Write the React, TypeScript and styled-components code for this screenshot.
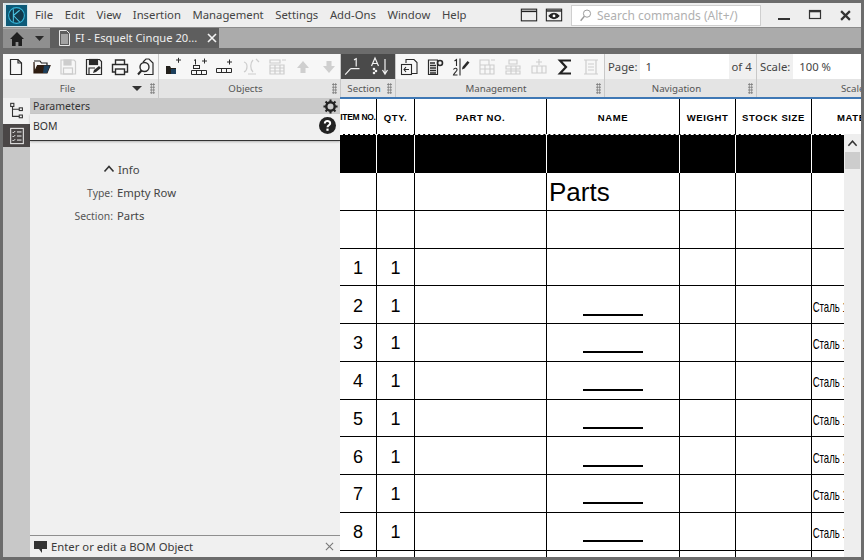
import React from "react";
import styled, { createGlobalStyle } from "styled-components";

const Global = createGlobalStyle`
  html, body { margin: 0; padding: 0; background: #6b6b6b; }
  * { box-sizing: border-box; }
`;

const Window = styled.div`
  width: 864px; height: 560px; overflow: hidden;
  border: 3px solid #6c6c6c;
  display: flex; flex-direction: column;
  font-family: "Noto Sans", "Open Sans", sans-serif;
  color: #3a3a3a;
`;

/* ---------- title bar ---------- */
const TitleBar = styled.div`
  height: 25px; flex: none; background: #eeeeee;
  display: flex; align-items: center;
  border-bottom: 1px solid #8b8b8b;
`;
const LogoBox = styled.div`
  width: 24px; height: 24px; margin-left: 1px; background: #d3e4ea;
  display: flex; align-items: center; justify-content: center;
`;
const Menu = styled.nav`
  display: flex; gap: 11.6px; margin-left: 7px; font-size: 11.3px; line-height: 16px; color: #444;
`;
const TitleTools = styled.div`
  margin-left: auto; display: flex; align-items: center;
`;
const ViewToggle = styled.span`
  display: flex; width: 25px; justify-content: center; color: #222;
`;
const SearchBox = styled.div`
  width: 190px; height: 21px; margin: 0 7px 0 5px; background: #fff; border: 1px solid #cfcfcf;
  display: flex; align-items: center; gap: 4px; padding-left: 6px;
  font-size: 12px; color: #b0b0b0; white-space: nowrap;
`;
const WinButton = styled.span`
  width: 31px; display: flex; justify-content: center; color: #333;
`;

/* ---------- tabs ---------- */
const TabBar = styled.div`
  height: 20px; flex: none; background: #ababab; display: flex;
`;
const HomeTabs = styled.div`
  width: 47px; margin-top: 1px; background: #8f8f8f; display: flex; align-items: center;
  padding-left: 6px; gap: 10px;
`;
const DocTab = styled.div`
  width: 169px; background: #5e5e5e; color: #eeeeee; font-size: 11.2px; line-height: 16px;
  display: flex; align-items: center; padding-left: 8px; gap: 4px; white-space: nowrap;
  svg { flex: none; }
`;
const TabClose = styled.span`
  margin-left: 6px; display: flex; color: #f4f4f4;
`;
const ToolbarGap = styled.div`
  height: 6px; flex: none; background: #6c6c6c;
`;

/* ---------- toolbar ---------- */
const Toolbar = styled.div`
  height: 44px; flex: none; display: flex; background: #e4e4e4;
`;
const Group = styled.section<{ $w: number }>`
  width: ${p => p.$w}px; flex: none; display: flex; flex-direction: column; overflow: hidden;
  border-right: 1px solid #c8c8c8;
  &:last-child { border-right: none; }
`;
const IconRow = styled.div<{ $dark?: boolean; $shift?: number }>`
  height: 25px; flex: none; display: flex; align-items: center;
  padding-left: ${p => p.$shift ?? 0}px;
  background: ${p => (p.$dark ? "#4a4a4a" : "#f7f7f7")};
`;
const ToolBtn = styled.span<{ $muted?: boolean; $light?: boolean }>`
  width: 26px; height: 25px; flex: none; display: flex; align-items: center; justify-content: center;
  color: ${p => (p.$light ? "#f2f2f2" : "#2a2a2a")};
  opacity: ${p => (p.$muted ? 0.2 : 1)};
`;
const GroupFoot = styled.div`
  flex: 1; display: flex; align-items: center; padding-right: 3px;
  font-size: 9.7px; color: #555; background: #e4e4e4; white-space: nowrap;
`;
const GroupLabel = styled.span<{ $start?: number }>`
  flex: 1; text-align: ${p => (p.$start ? "left" : "center")};
  padding-left: ${p => p.$start ?? 0}px;
`;
const FootCaret = styled.span`
  width: 0; height: 0; margin-right: 8px; border-left: 5px solid transparent; border-right: 5px solid transparent;
  border-top: 5px solid #333;
`;
const Grip = styled.span`
  width: 5px; height: 11px; flex: none;
  background-image: radial-gradient(#777 0.8px, transparent 1px);
  background-size: 2.5px 2.8px;
`;
const FieldRow = styled.div`
  height: 25px; flex: none; display: flex; align-items: center; background: #f0f0f0;
  font-size: 11.3px; color: #444; padding-left: 3px; white-space: nowrap;
`;
const FieldInput = styled.span<{ $w: number; $gap: number }>`
  width: ${p => p.$w}px; height: 25px; flex: none; margin: 0 3px 0 ${p => p.$gap}px; background: #fff;
  display: flex; align-items: center; padding-left: 6px;
`;

/* ---------- main ---------- */
const Main = styled.main`
  flex: 1; min-height: 0; display: flex;
`;
const SideRail = styled.aside`
  width: 27px; flex: none; background: #c8c8c8; display: flex; flex-direction: column;
`;
const RailBtn = styled.span<{ $active?: boolean }>`
  height: ${p => (p.$active ? 23 : 26)}px; display: flex; align-items: center; justify-content: center;
  background: ${p => (p.$active ? "#4a4646" : "#f0f0f0")};
  color: ${p => (p.$active ? "#f4f4f4" : "#333")};
`;
const Panel = styled.div`
  width: 310px; flex: none; background: #f0f0f0; display: flex; flex-direction: column;
`;
const PanelHead = styled.div`
  height: 16px; flex: none; background: #c9c9c9; display: flex; align-items: center; justify-content: space-between;
  padding: 0 2px 0 3px; font-size: 10.5px; color: #333;
`;
const BomRow = styled.div`
  height: 27px; flex: none; display: flex; align-items: center; justify-content: space-between;
  padding: 0 4px 3px 3px; font-size: 10.5px; color: #333;
  border-bottom: 1px solid #333; box-shadow: 0 1px 2px rgba(0,0,0,.25);
`;
const PanelBody = styled.div`
  flex: 1; padding: 19px 0 0 0; font-size: 11.3px; color: #444;
`;
const InfoHead = styled.div`
  display: flex; align-items: center; gap: 3px; padding-left: 73px; height: 18px; margin-bottom: 3px;
`;
const InfoRow = styled.div`
  display: grid; grid-template-columns: 83px 1fr; column-gap: 4px; height: 23px; align-items: center;
`;
const InfoKey = styled.span`
  text-align: right; color: #555; font-size: 10.4px;
`;
const StatusBar = styled.div`
  height: 22px; flex: none; display: flex; align-items: center; gap: 3px; padding: 0 6px 0 4px;
  border-top: 1px solid #8f8f8f; font-size: 11.3px; color: #3a3a3a;
`;
const StatusClose = styled.span`
  margin-left: auto; display: flex; color: #777;
`;

/* ---------- sheet ---------- */
const Sheet = styled.div`
  flex: 1; min-width: 0; background: #fff; display: flex; flex-direction: column;
  border-top: 2px solid #3f78b5; font-family: "Liberation Sans", Arial, sans-serif; color: #000;
  margin-top: -1px;
`;
const HeadRow = styled.div`
  height: 35px; flex: none; display: grid; grid-template-columns: 37px 38px 132px 133px 56px 76px 1fr;
`;
const HeadCell = styled.div<{ $tight?: boolean }>`
  border-right: 1px solid #000; display: flex; align-items: center; justify-content: center; padding-top: 1px;
  font-size: ${p => (p.$tight ? 8.5 : 9.5)}px; font-weight: 700; white-space: nowrap; overflow: hidden;
  letter-spacing: ${p => (p.$tight ? "-0.3px" : "0.6px")};
  &:last-child { border-right: none; justify-content: flex-start; padding-left: 25px; }
`;
const SheetBody = styled.div`
  flex: 1; min-height: 0; display: flex;
`;
const Rows = styled.div`
  flex: 1; min-width: 0; overflow: hidden;
`;
const BandRow = styled.div`
  height: 39px; display: grid; grid-template-columns: 37px 38px 132px 133px 56px 76px 1fr;
  background: #000; border-top: 1px dashed #fff;
`;
const BandCell = styled.div`
  border-right: 1px solid #fff;
  &:last-child { border-right: none; }
`;
const DataRow = styled.div`
  height: 37.75px; display: grid; grid-template-columns: 37px 38px 132px 133px 56px 76px 1fr;
  border-bottom: 1px solid #000;
`;
const Cell = styled.div`
  border-right: 1px solid #000; display: flex; align-items: center; justify-content: center;
  padding-top: 3px; font-size: 18px; overflow: hidden; white-space: nowrap;
  &:last-child { border-right: none; }
`;
const PartsTitle = styled.span`
  font-size: 26px; width: 100%; padding-left: 2px;
`;
const Signature = styled.span`
  display: block; width: 60px; height: 2px; background: #000; margin-top: 17px;
`;
const Material = styled.span`
  display: block; flex: none; font-size: 15px; width: 100%; padding-left: 1px;
  transform: scaleX(0.64); transform-origin: left center;
`;
const Scroll = styled.div`
  width: 17px; flex: none; background: #eeeeee; display: flex; flex-direction: column; align-items: center;
  padding-top: 4px;
`;
const ScrollThumb = styled.div`
  width: 15px; height: 17px; margin-top: 3px; background: #cdcdcd;
`;

/* ---------- drawings ---------- */
type P = { s?: number };
const Svg: React.FC<React.PropsWithChildren<{ s?: number; w?: number }>> = ({ s = 20, w = 1.2, children }) => (
  <svg width={s} height={s} viewBox="0 0 20 20" fill="none" stroke="currentColor" strokeWidth={w}>{children}</svg>
);
const Logo = () => (
  <svg width="21" height="21" viewBox="0 0 20 20">
    <rect width="20" height="20" fill="#0d5a78" />
    <circle cx="10" cy="10" r="7.5" fill="#123a4c" stroke="#33b4d8" strokeWidth="1" />
    <path d="M7 4v12M7 10l6-5M7 10l6 6" stroke="#4cc4e4" strokeWidth="1" fill="none" />
  </svg>
);
const WindowIcon = () => <Svg s={18}><rect x="1.5" y="3.5" width="17" height="13" /><path d="M1.5 6h17" strokeWidth="1.6" /></Svg>;
const EyeIcon = () => (
  <Svg s={18}><rect x="1.5" y="3.5" width="17" height="13" /><path d="M1.5 5.5h17" strokeWidth="1.6" />
    <path d="M4.5 11c3-4 8-4 11 0-3 4-8 4-11 0z" fill="currentColor" /><circle cx="10" cy="11" r="1.6" fill="#fff" stroke="none" /></Svg>
);
const SearchIcon = () => <Svg s={15} w={1.3}><circle cx="12" cy="7.5" r="4.8" stroke="#999" /><path d="M8.5 11L3.5 17" stroke="#999" strokeWidth="1.8" /></Svg>;
const HomeIcon = () => (
  <svg width="16" height="16" viewBox="0 0 16 16" fill="#1f1f1f"><path d="M8 1L1 8h2v7h3.6v-4h2.8v4H13V8h2z" /></svg>
);
const Caret = () => <svg width="9" height="5" viewBox="0 0 9 5" fill="#2a2a2a"><path d="M0 0h9L4.5 5z" /></svg>;
const DocLines = () => (
  <svg width="13" height="16" viewBox="0 0 13 16" fill="none" stroke="#e8e8e8" strokeWidth="1">
    <path d="M1.5.5h7l3 3v12h-10z" /><path d="M3 5h7M3 7h7M3 9h7M3 11h7M3 13h7" />
  </svg>
);
const Cross = ({ s = 10, w = 1.6 }: P & { w?: number }) => (
  <svg width={s} height={s} viewBox="0 0 10 10" stroke="currentColor" strokeWidth={w}><path d="M1 1l8 8M9 1l-8 8" /></svg>
);
const NewFile = () => <Svg><path d="M4.5 2.5h7.5l3.5 3.5v11.5h-11z" /><path d="M12 2.5V6h3.5" /></Svg>;
const OpenFolder = () => <Svg><path d="M2 4h6l1.5 2H15v2.5" stroke="#222" /><path d="M2 5v11h13l3-7.5H5.5L3 14" fill="#2e1c10" stroke="#2e1c10" /><path d="M12 8.5h6l-3 7.5h-4z" fill="#1c3f5c" stroke="none" /></Svg>;
const SaveGray = () => <Svg><path d="M3 3h13l1.5 1.5V17H3z" /><rect x="6" y="3" width="7" height="5" fill="currentColor" /><rect x="5.5" y="11" width="9" height="6" /></Svg>;
const SaveAs = () => <Svg><path d="M2.5 2.5h13l2 2v13h-15z" /><rect x="5.5" y="2.5" width="8" height="5" fill="currentColor" /><path d="M5 17v-6h6" /><path d="M9 16l1-3 5-4 2 2-5 4z" fill="currentColor" stroke="none" /></Svg>;
const Printer = () => <Svg><path d="M5.5 7V3h9v4M5.5 15h-3V7.5h15V15h-3" strokeWidth="1.4" /><rect x="5.5" y="12" width="9" height="5.5" strokeWidth="1.4" /></Svg>;
const Preview = () => <Svg><path d="M7 5l3-3h3l4 4v11.5H8" /><circle cx="8.5" cy="10" r="4.5" strokeWidth="1.4" /><path d="M5.5 13.5L2 17.5" strokeWidth="2" /></Svg>;
const AddSection = () => (
  <Svg><path d="M13 3h5M15.5 .8v5" strokeWidth="1" /><path d="M3 9h4l1 2h5v6H3z" fill="#23201c" stroke="none" /><path d="M8 12h5v5H8z" fill="#1c3f5c" stroke="none" /></Svg>
);
const AddNumbered = () => (
  <Svg w={1}><path d="M5 3.5l1.5-1v5M13 4h5M15.5 1.5v5" /><rect x="4.5" y="8.5" width="6" height="3" /><path d="M2.5 13.5h15v4h-15zM7.5 13.5v4M12.5 13.5v4" /></Svg>
);
const AddRow = () => <Svg w={1}><path d="M12 5h5M14.5 2.5v5" /><path d="M1.5 11.5h15v4h-15zM6.5 11.5v4M11.5 11.5v4" /></Svg>;
const GhostSplit = () => <Svg w={1.2}><path d="M3 5c4 1 4 8 0 10M12 3c-3 3-3 9 0 12M15 2l3 3M7 17h8" /></Svg>;
const GhostTable = () => <Svg w={1.2}><path d="M3 3h10v3H3zM3 8h14v9H3zM3 11h14M3 14h14M8 8v9M13 8v9M15 3h4" /></Svg>;
const ArrowUp = () => <svg width="20" height="20" viewBox="0 0 20 20" fill="#333"><path d="M10 4l6 7h-3.5v5h-5v-5H4z" /></svg>;
const ArrowDown = () => <svg width="20" height="20" viewBox="0 0 20 20" fill="#333"><path d="M10 16l6-7h-3.5V4h-5v5H4z" /></svg>;
const Baseline = () => <Svg s={22} w={1.1}><path d="M10 3.5l2-1v7M7 11.5h8M7 11.5L2 17" /></Svg>;
const Sort = () => (
  <svg width="24" height="22" viewBox="0 0 24 22" fill="none" stroke="currentColor" strokeWidth="1.2">
    <path d="M3.5 10L7 2l3.5 8M5 7.5h4" /><circle cx="6" cy="13" r=".7" /><circle cx="8" cy="15" r=".7" /><circle cx="6" cy="17" r=".7" /><path d="M17 3v14M14.5 14l2.5 4 2.5-4" />
  </svg>
);
const CopyPage = () => <Svg w={1.1}><path d="M7 6V2.5h8l3 3v11h-5" /><rect x="2.5" y="7.5" width="10" height="10" /><path d="M5 12.5h5M7 10l-2 2.5L7 15" /></Svg>;
const PageGear = () => (
  <Svg w={1.2}><path d="M3.5 3h9v14.5h-9z" /><path d="M5 6h5M5 8.5h6M5 11h6M5 13.5h6M5 16h6" strokeWidth="1.3" /><circle cx="15" cy="6" r="2.5" strokeWidth="1.6" /></Svg>
);
const Fraction = () => (
  <Svg w={1.1}><path d="M3.5 4l2-1.5V9M2.5 12.5c1-2 4-1.5 3.5.5-.3 1.4-3 3-3.5 5h4M9 1.5v17" />
    <path d="M11.5 10l5-6 2 1.5-5 6-2.5 1z" fill="currentColor" stroke="none" /></Svg>
);
const GhostGrid = () => <Svg w={1.1}><path d="M3 3h9v5H3zM3 3v14h14V8H3M8 8v9M13 8v9M3 12h14M14 3h4" /></Svg>;
const GhostGridB = () => <Svg w={1.1}><path d="M6 3h8v4H6zM3 9h14v3H3zM3 14h14v3H3zM8 9v8M13 9v8" /></Svg>;
const GhostInsert = () => <Svg w={1.1}><path d="M10 2v6M7 5h6M3 9h14v7H3zM8 9v7M13 9v7" /></Svg>;
const Sigma = () => <svg width="20" height="20" viewBox="0 0 20 20" fill="none" stroke="#222" strokeWidth="2.2"><path d="M16 3.5H5l6 6.5-6 6.5h11" /></svg>;
const GhostPage = () => <Svg w={1.2}><path d="M3 3h14M5 3v14h10V3M7 7h6M7 10h6M7 13h6M3 17h14" /></Svg>;
const Tree = () => (
  <Svg s={18} w={1.2}><rect x="3" y="1.5" width="3.5" height="3.5" /><rect x="12.5" y="6.5" width="3.5" height="3" /><rect x="12.5" y="14.5" width="3.5" height="3" /><path d="M5 5v11h7.5M5 8h7.5" /></Svg>
);
const Checklist = () => (
  <Svg s={18} w={1.1}><rect x="3" y="1.5" width="14" height="17" /><path d="M5 5.5l1 1 2-2M5 10l1 1 2-2M5 14.5l1 1 2-2M10 5.5h5M10 10h5M10 14.5h5" /></Svg>
);
const Gear = () => (
  <svg width="15" height="15" viewBox="0 0 16 16"><circle cx="8" cy="8" r="4.5" fill="none" stroke="#222" strokeWidth="2.6" />
    <path d="M8 .5v3M8 12.5v3M.5 8h3M12.5 8h3M2.7 2.7l2.1 2.1M11.2 11.2l2.1 2.1M13.3 2.7l-2.1 2.1M4.8 11.2l-2.1 2.1" stroke="#222" strokeWidth="2.2" /></svg>
);
const Help = () => (
  <svg width="17" height="17" viewBox="0 0 17 17"><circle cx="8.5" cy="8.5" r="8.5" fill="#222" />
    <path d="M5.8 6.5c0-3.2 5.4-3.2 5.4-.2 0 2-2.7 2-2.7 4" fill="none" stroke="#fff" strokeWidth="2" /><rect x="7.4" y="11.6" width="2.2" height="2.2" fill="#fff" /></svg>
);
const ChevronUp = ({ s = 12 }: P) => (
  <svg width={s} height={s} viewBox="0 0 12 12" fill="none" stroke="#333" strokeWidth="1.6"><path d="M1.5 8.5L6 3.5l4.5 5" /></svg>
);
const Bubble = () => (
  <svg width="14" height="13" viewBox="0 0 14 13" fill="#333"><path d="M0 1h13v8H8v4L5 9H0z" /></svg>
);

const menu = ["File", "Edit", "View", "Insertion", "Management", "Settings", "Add-Ons", "Window", "Help"];
const columns = ["PART NO.", "NAME", "WEIGHT", "STOCK SIZE", "MATERIAL"];
const parts = [1, 2, 3, 4, 5, 6, 7, 8];
const colCount = Array.from({ length: 7 });

const Foot: React.FC<{ label: string; caret?: boolean }> = ({ label, caret }) => (
  <GroupFoot>
    <GroupLabel>{label}</GroupLabel>
    {caret && <FootCaret />}
    <Grip />
  </GroupFoot>
);

export default function App() {
  return (
    <Window>
      <Global />
      <TitleBar>
        <LogoBox><Logo /></LogoBox>
        <Menu>{menu.map(m => <span key={m}>{m}</span>)}</Menu>
        <TitleTools>
          <ViewToggle><WindowIcon /></ViewToggle>
          <ViewToggle><EyeIcon /></ViewToggle>
          <SearchBox><SearchIcon /><span>Search commands (Alt+/)</span></SearchBox>
          <WinButton><svg width="14" height="14" viewBox="0 0 14 14" stroke="#333" strokeWidth="2"><path d="M1 11h12" /></svg></WinButton>
          <WinButton><svg width="14" height="14" viewBox="0 0 14 14" fill="none" stroke="#333" strokeWidth="1.2"><rect x="1.5" y="2.5" width="11" height="8" /><path d="M1.5 3.5h11" strokeWidth="1.6" /></svg></WinButton>
          <WinButton><Cross s={11} w={2} /></WinButton>
        </TitleTools>
      </TitleBar>
      <TabBar>
        <HomeTabs><HomeIcon /><Caret /></HomeTabs>
        <DocTab><DocLines /><span>FI - Esquelt Cinque 20...</span><TabClose><Cross /></TabClose></DocTab>
      </TabBar>
      <ToolbarGap />
      <Toolbar>
        <Group $w={156}>
          <IconRow>
            <ToolBtn><NewFile /></ToolBtn><ToolBtn><OpenFolder /></ToolBtn><ToolBtn $muted><SaveGray /></ToolBtn>
            <ToolBtn><SaveAs /></ToolBtn><ToolBtn><Printer /></ToolBtn><ToolBtn><Preview /></ToolBtn>
          </IconRow>
          <Foot label="File" caret />
        </Group>
        <Group $w={182}>
          <IconRow $shift={1}>
            <ToolBtn><AddSection /></ToolBtn><ToolBtn><AddNumbered /></ToolBtn><ToolBtn><AddRow /></ToolBtn>
            <ToolBtn $muted><GhostSplit /></ToolBtn><ToolBtn $muted><GhostTable /></ToolBtn><ToolBtn $muted><ArrowUp /></ToolBtn><ToolBtn $muted><ArrowDown /></ToolBtn>
          </IconRow>
          <Foot label="Objects" />
        </Group>
        <Group $w={55}>
          <IconRow $dark>
            <ToolBtn $light><Baseline /></ToolBtn><ToolBtn $light><Sort /></ToolBtn>
          </IconRow>
          <Foot label="Section" />
        </Group>
        <Group $w={209}>
          <IconRow>
            <ToolBtn><CopyPage /></ToolBtn><ToolBtn><PageGear /></ToolBtn><ToolBtn><Fraction /></ToolBtn>
            <ToolBtn $muted><GhostGrid /></ToolBtn><ToolBtn $muted><GhostGridB /></ToolBtn><ToolBtn $muted><GhostInsert /></ToolBtn>
            <ToolBtn><Sigma /></ToolBtn><ToolBtn $muted><GhostPage /></ToolBtn>
          </IconRow>
          <Foot label="Management" />
        </Group>
        <Group $w={152}>
          <FieldRow>Page:<FieldInput $w={89} $gap={2}>1</FieldInput>of 4</FieldRow>
          <Foot label="Navigation" />
        </Group>
        <Group $w={104}>
          <FieldRow>Scale:<FieldInput $w={72} $gap={3}>100 %</FieldInput></FieldRow>
          <GroupFoot><GroupLabel $start={84}>Scale</GroupLabel></GroupFoot>
        </Group>
      </Toolbar>
      <Main>
        <SideRail>
          <RailBtn><Tree /></RailBtn>
          <RailBtn $active><Checklist /></RailBtn>
        </SideRail>
        <Panel>
          <PanelHead><span>Parameters</span><Gear /></PanelHead>
          <BomRow><span>BOM</span><Help /></BomRow>
          <PanelBody>
            <InfoHead><ChevronUp /><span>Info</span></InfoHead>
            <InfoRow><InfoKey>Type:</InfoKey><span>Empty Row</span></InfoRow>
            <InfoRow><InfoKey>Section:</InfoKey><span>Parts</span></InfoRow>
          </PanelBody>
          <StatusBar><Bubble /><span>Enter or edit a BOM Object</span><StatusClose><Cross s={9} w={1.2} /></StatusClose></StatusBar>
        </Panel>
        <Sheet>
          <HeadRow>
            <HeadCell $tight>ITEM NO.</HeadCell>
            <HeadCell>QTY.</HeadCell>
            {columns.map(c => <HeadCell key={c}>{c}</HeadCell>)}
          </HeadRow>
          <SheetBody>
            <Rows>
              <BandRow>{colCount.map((_, i) => <BandCell key={i} />)}</BandRow>
              <DataRow>
                <Cell /><Cell /><Cell /><Cell><PartsTitle>Parts</PartsTitle></Cell><Cell /><Cell /><Cell />
              </DataRow>
              <DataRow>{colCount.map((_, i) => <Cell key={i} />)}</DataRow>
              {parts.map(n => (
                <DataRow key={n}>
                  <Cell>{n}</Cell>
                  <Cell>1</Cell>
                  <Cell />
                  <Cell>{n > 1 && <Signature />}</Cell>
                  <Cell />
                  <Cell />
                  <Cell>{n > 1 && <Material>Сталь 10</Material>}</Cell>
                </DataRow>
              ))}
              <DataRow>{colCount.map((_, i) => <Cell key={i} />)}</DataRow>
            </Rows>
            <Scroll><ChevronUp s={11} /><ScrollThumb /></Scroll>
          </SheetBody>
        </Sheet>
      </Main>
    </Window>
  );
}
